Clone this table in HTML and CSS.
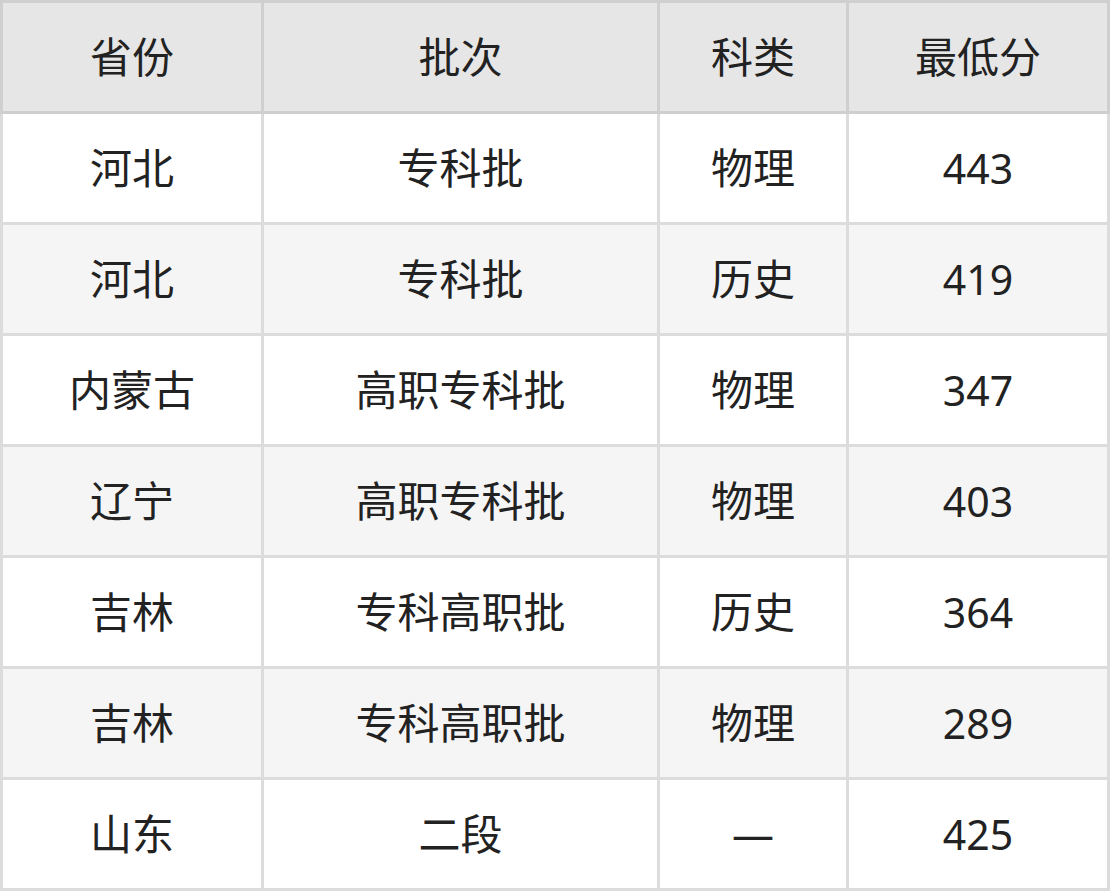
FILE: index.html
```html
<!DOCTYPE html>
<html lang="zh-CN">
<head>
<meta charset="utf-8">
<title>分数线</title>
<link rel="stylesheet" href="styles.css">
</head>
<body>
<div class="table" role="table">
  <div class="row head" role="row">
    <div class="cell c1" role="columnheader">省份</div>
    <div class="cell c2" role="columnheader">批次</div>
    <div class="cell c3" role="columnheader">科类</div>
    <div class="cell c4" role="columnheader">最低分</div>
  </div>
  <div class="row" role="row">
    <div class="cell c1">河北</div><div class="cell c2">专科批</div><div class="cell c3">物理</div><div class="cell c4 num">443</div>
  </div>
  <div class="row alt" role="row">
    <div class="cell c1">河北</div><div class="cell c2">专科批</div><div class="cell c3">历史</div><div class="cell c4 num">419</div>
  </div>
  <div class="row" role="row">
    <div class="cell c1">内蒙古</div><div class="cell c2">高职专科批</div><div class="cell c3">物理</div><div class="cell c4 num">347</div>
  </div>
  <div class="row alt" role="row">
    <div class="cell c1">辽宁</div><div class="cell c2">高职专科批</div><div class="cell c3">物理</div><div class="cell c4 num">403</div>
  </div>
  <div class="row" role="row">
    <div class="cell c1">吉林</div><div class="cell c2">专科高职批</div><div class="cell c3">历史</div><div class="cell c4 num">364</div>
  </div>
  <div class="row alt" role="row">
    <div class="cell c1">吉林</div><div class="cell c2">专科高职批</div><div class="cell c3">物理</div><div class="cell c4 num">289</div>
  </div>
  <div class="row" role="row">
    <div class="cell c1">山东</div><div class="cell c2">二段</div><div class="cell c3">—</div><div class="cell c4 num">425</div>
  </div>
</div>
</body>
</html>
```
FILE: styles.css
```css
html, body {
  margin: 0;
  padding: 0;
  background: #ffffff;
}
body {
  font-family: "Noto Sans", "Noto Sans CJK SC", sans-serif;
  color: #222222;
}
.table {
  width: 1110px;
  display: flex;
  flex-direction: column;
}
.row {
  display: grid;
  grid-template-columns: 264px 396px 189px 261px;
  height: 111px;
  background: #ffffff;
}
.row.alt {
  background: #f5f5f5;
}
.row.head {
  height: 114px;
  background: #e6e6e6;
}
.cell {
  box-sizing: border-box;
  display: flex;
  align-items: center;
  justify-content: center;
  font-size: 42px;
  line-height: 1;
  border-right: 3px solid #dcdcdc;
  border-bottom: 3px solid #dcdcdc;
}
.cell.num {
  font-size: 41px;
}
.cell.c1 {
  border-left: 3px solid #dcdcdc;
}
.head .cell {
  border-color: #cfcfcf;
  border-top: 3px solid #cfcfcf;
}
.head .cell.c1 {
  border-left-color: #cfcfcf;
}
```
